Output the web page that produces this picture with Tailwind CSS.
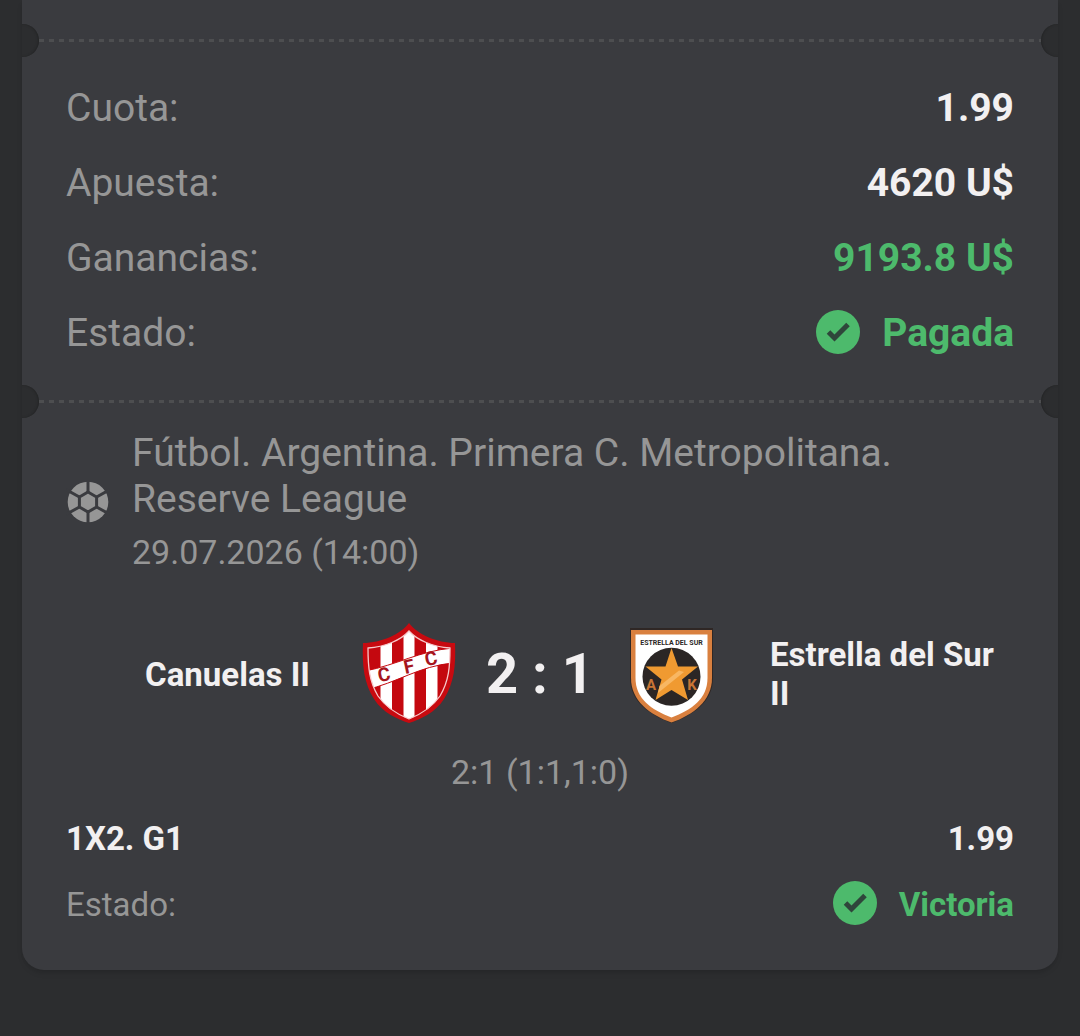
<!DOCTYPE html>
<html lang="es">
<head>
    <meta charset="UTF-8">
    <meta name="viewport" content="width=device-width, initial-scale=1.0">
    <title>Historial de apuestas</title>
    <script src="https://cdn.jsdelivr.net/npm/@tailwindcss/browser@4"></script>
</head>
<body class="min-h-screen bg-[#2c2d2f] font-['Roboto',sans-serif] text-[#f2f0f1]">
    <main class="mx-[22px] overflow-hidden rounded-b-[22px] bg-[#3a3b3f] pt-6 shadow-md">

        <!-- Ticket divider -->
        <div class="-mx-[17px] flex items-center">
            <span class="h-[33px] w-[34px] shrink-0 rounded-full bg-[#2c2d2f] shadow-[inset_-1px_0_2px_#242526]"></span>
            <span class="h-[3px] grow bg-[repeating-linear-gradient(90deg,#4d4e50_0_5px,transparent_5px_10px)]"></span>
            <span class="h-[33px] w-[34px] shrink-0 rounded-full bg-[#2c2d2f] shadow-[inset_1px_0_2px_#242526]"></span>
        </div>

        <!-- Totals -->
        <dl class="px-11 py-[14px] text-[39px] leading-[75px]">
            <div class="flex justify-between">
                <dt class="text-[#969696]">Cuota:</dt>
                <dd class="font-bold">1.99</dd>
            </div>
            <div class="flex justify-between">
                <dt class="text-[#969696]">Apuesta:</dt>
                <dd class="font-bold">4620 U$</dd>
            </div>
            <div class="flex justify-between">
                <dt class="text-[#969696]">Ganancias:</dt>
                <dd class="font-bold text-[#4dba6c]">9193.8 U$</dd>
            </div>
            <div class="flex justify-between">
                <dt class="text-[#969696]">Estado:</dt>
                <dd class="flex items-center gap-[22px] font-bold text-[#4dba6c]">
                    <svg class="mb-1 size-11" viewBox="0 0 44 44" aria-hidden="true">
                        <circle cx="22" cy="22" r="22" fill="currentColor"/>
                        <path d="M12.5 22l6 6L32 14.5" fill="none" stroke="#2f463b" stroke-width="5"/>
                    </svg>
                    Pagada
                </dd>
            </div>
        </dl>

        <!-- Ticket divider -->
        <div class="-mx-[17px] flex items-center">
            <span class="h-[33px] w-[34px] shrink-0 rounded-full bg-[#2c2d2f] shadow-[inset_-1px_0_2px_#242526]"></span>
            <span class="h-[3px] grow bg-[repeating-linear-gradient(90deg,#4d4e50_0_5px,transparent_5px_10px)]"></span>
            <span class="h-[33px] w-[34px] shrink-0 rounded-full bg-[#2c2d2f] shadow-[inset_1px_0_2px_#242526]"></span>
        </div>

        <section class="px-11 pt-3 pb-8">
            <!-- League -->
            <div class="flex items-center gap-[22px] text-[#969696]">
                <svg class="size-11 shrink-0" viewBox="0 0 44 44" aria-hidden="true">
                    <circle cx="22" cy="22" r="20.3" fill="currentColor"/>
                    <g fill="none" stroke="#3a3b3f" stroke-width="3">
                        <path d="M22 12l8.600 5v10L22 32l-8.600-5V17z"/>
                        <path d="M22 0v12M22 32v12M13.400 17L0 9.500M30.600 17L44 9.500M13.400 27L0 34.500M30.600 27L44 34.500"/>
                    </g>
                </svg>
                <div>
                    <h1 class="text-[39px] leading-[46px]">Fútbol. Argentina. Primera C. Metropolitana. Reserve League</h1>
                    <p class="mt-2 text-[34px] leading-11">29.07.2026 (14:00)</p>
                </div>
            </div>

            <!-- Teams and score -->
            <div class="mt-12 grid grid-cols-[1fr_460px_1fr] items-center">
                <p class="text-right text-[33px] leading-[39px] font-bold">Canuelas II</p>
                <div class="flex items-center justify-between px-[47px]">
                    <svg class="size-[104px]" viewBox="0 0 104 104" role="img" aria-label="Canuelas">
                        <defs>
                            <clipPath id="canuelas">
                                <path d="M52 9C44 18 28 25 11 26C11 44 12 59 21 74C30 87 42 93 52 97C62 93 74 87 83 74C92 59 93 44 93 26C76 25 60 18 52 9Z"/>
                            </clipPath>
                        </defs>
                        <path d="M52 1C44 12 24 21 6 21C5 44 7 61 17 77C26 91 40 97 52 101C64 97 78 91 87 77C97 61 99 44 98 21C80 21 60 12 52 1Z" fill="#c80a10"/>
                        <g clip-path="url(#canuelas)">
                            <path d="M8 8h88v92H8z" fill="#c4080f"/>
                            <path d="M23.500 8h11.500v92H23.500zM46.500 8h11v92h-11zM69 8h11.500v92H69z" fill="#fff"/>
                            <path d="M8 49C40 43 62 29 96 26V41C62 44 40 61 8 68Z" fill="#fff"/>
                            <path d="M8 68C40 61 62 44 96 41M8 49C40 43 62 29 96 26" fill="none" stroke="#c4080f"/>
                        </g>
                        <path d="M52 9C44 18 28 25 11 26C11 44 12 59 21 74C30 87 42 93 52 97C62 93 74 87 83 74C92 59 93 44 93 26C76 25 60 18 52 9Z" fill="none" stroke="#f7c9cb" stroke-width="1.300"/>
                        <g fill="#a5151d" font-family="Roboto, sans-serif" font-size="19" font-weight="700" text-anchor="middle">
                            <text x="27" y="59" transform="rotate(-12 27 53)">C</text>
                            <text x="52" y="51" transform="rotate(-12 52 45)">F</text>
                            <text x="74" y="43" transform="rotate(-12 74 37)">C</text>
                        </g>
                    </svg>
                    <p class="text-[56px] leading-[64px] font-bold">2 : 1</p>
                    <svg class="size-[104px]" viewBox="-2 -2 104 104" role="img" aria-label="Estrella del Sur">
                        <path d="M9 4h83v50c0 24-20 37-41.500 45C29 91 9 78 9 54z" fill="#2f2725"/>
                        <path d="M10 6h81v48c0 23-19 37-40.500 44.500C29 91 10 77 10 54z" fill="#d9803f"/>
                        <path d="M14.500 10.500h72V54c0 21-16 32-36 39.500C30.500 86 14.500 75 14.500 54z" fill="#fff"/>
                        <circle cx="50.500" cy="52.700" r="29" fill="#2b2625"/>
                        <path d="M50.500 24L57 42.500H77L61 55.500 67 76 50.500 66 34.500 76 40.500 55.500 24.500 42.500H44.500z" fill="#f09a31"/>
                        <path d="M38.500 62L58 46.500 63 48 37 69z" fill="#f8b763"/>
                        <text x="50.500" y="21" fill="#2b2625" font-family="'Liberation Sans Narrow', Roboto, sans-serif" font-size="7" font-weight="700" text-anchor="middle">ESTRELLA DEL SUR</text>
                        <g fill="#c87535" font-family="'Liberation Sans Narrow', Roboto, sans-serif" font-size="15" font-weight="700" text-anchor="middle">
                            <text x="30" y="66">A</text>
                            <text x="71" y="66">K</text>
                        </g>
                    </svg>
                </div>
                <p class="text-[33px] leading-[39px] font-bold">Estrella del Sur II</p>
            </div>
            <p class="mt-6 text-center text-[34px] leading-11 text-[#969696]">2:1 (1:1,1:0)</p>

            <!-- Bet -->
            <div class="mt-3 flex justify-between text-[33px] leading-[66px] font-bold">
                <h2>1X2. G1</h2>
                <p>1.99</p>
            </div>
            <div class="flex justify-between text-[33px] leading-[66px]">
                <p class="text-[#969696]">Estado:</p>
                <p class="flex items-center gap-[22px] font-bold text-[#4dba6c]">
                    <svg class="mb-1 size-11" viewBox="0 0 44 44" aria-hidden="true">
                        <circle cx="22" cy="22" r="22" fill="currentColor"/>
                        <path d="M12.5 22l6 6L32 14.5" fill="none" stroke="#2f463b" stroke-width="5"/>
                    </svg>
                    Victoria
                </p>
            </div>
        </section>
    </main>
</body>
</html>
